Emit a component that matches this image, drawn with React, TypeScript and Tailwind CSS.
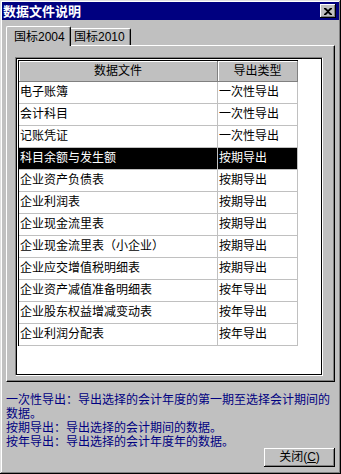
const rows: [string, string][] = [
  ['电子账簿', '一次性导出'],
  ['会计科目', '一次性导出'],
  ['记账凭证', '一次性导出'],
  ['科目余额与发生额', '按期导出'],
  ['企业资产负债表', '按期导出'],
  ['企业利润表', '按期导出'],
  ['企业现金流里表', '按期导出'],
  ['企业现金流里表（小企业）', '按期导出'],
  ['企业应交增值税明细表', '按期导出'],
  ['企业资产减值准备明细表', '按年导出'],
  ['企业股东权益增减变动表', '按年导出'],
  ['企业利润分配表', '按年导出'],
];

const font = "font-['Liberation_Sans','Noto_Sans_CJK_SC',sans-serif]";

export default function App() {
  return (
    <div className={`w-[341px] h-[474px] bg-[#c0c0c0] p-[2px] flex flex-col text-black ${font} shadow-[inset_-1px_-1px_#000,inset_1px_1px_#dfdfdf,inset_-2px_-2px_#808080,inset_2px_2px_#fff]`}>
      {/* title bar */}
      <div className="h-[18px] bg-[#000080] flex items-center justify-between pl-[1px] pr-[3px]">
        <span className="text-white font-bold text-[13px] leading-[18px] font-['Noto_Sans_CJK_SC',sans-serif]">数据文件说明</span>
        <button className="w-[16px] h-[14px] bg-[#c0c0c0] flex items-center justify-center shadow-[inset_-1px_-1px_#000,inset_1px_1px_#fff,inset_-2px_-2px_#808080]">
          <svg width="8" height="7" viewBox="0 0 8 7">
            <path d="M0 0h2l2 2 2-2h2v1L5 3.5 8 6v1H6L4 5 2 7H0V6l3-2.5L0 1z" fill="#000" />
          </svg>
        </button>
      </div>

      {/* tabs */}
      <div className="mt-[6px] ml-[4px] flex items-end h-[20px] relative z-10">
        <div className="h-[20px] w-[65px] bg-[#c0c0c0] border-l border-t border-white rounded-tl-[2px] rounded-tr-[2px] shadow-[inset_-1px_0_#808080] border-r border-r-black flex items-center pl-[7px] text-[12px] leading-none">
          国标2004
        </div>
        <div className="h-[17px] w-[60px] mb-[1px] bg-[#c0c0c0] border-t border-white rounded-tr-[2px] border-r border-r-black shadow-[inset_-1px_0_#808080] flex items-center pl-[3px] text-[12px] leading-none">
          国标2010
        </div>
      </div>

      {/* panel */}
      <div className="ml-[4px] mr-[4px] -mt-[1px] h-[337px] border-l border-t border-white border-r border-b border-r-black border-b-black shadow-[inset_-1px_-1px_#808080] pt-[11px] pl-[8px] pr-[11px] pb-[5px]">
        <div className="h-full border border-t-[#808080] border-l-[#808080] border-b-white border-r-white">
          <div className="h-full border border-black bg-white pl-[1px] pt-[1px]">
            <div className="w-[280px] border-l border-t border-black text-[12px] leading-[21px]">
              <div className="flex h-[21px] bg-[#c0c0c0]">
                <div className="w-[199px] text-center border-r border-b border-[#808080] shadow-[inset_1px_1px_#fff]">数据文件</div>
                <div className="w-[80px] text-center border-r border-b border-[#808080] shadow-[inset_1px_1px_#fff]">导出类型</div>
              </div>
              {rows.map(([name, type], i) => {
                const sel = i === 3;
                return (
                  <div key={i} className={`flex h-[22px] border-b border-[#c0c0c0] ${sel ? 'bg-black text-white' : ''}`}>
                    <div className="w-[199px] pl-[1px] border-r border-[#c0c0c0] whitespace-nowrap">{name}</div>
                    <div className="w-[80px] pl-[1px] border-r border-[#c0c0c0] whitespace-nowrap">{type}</div>
                  </div>
                );
              })}
            </div>
          </div>
        </div>
      </div>

      {/* description */}
      <div className="mt-[10px] ml-[4px] w-[328px] text-[12px] leading-[14px] text-[#000080] font-['Noto_Sans_CJK_SC',sans-serif]">
        <p>一次性导出：导出选择的会计年度的第一期至选择会计期间的数据。</p>
        <p>按期导出：导出选择的会计期间的数据。</p>
        <p>按年导出：导出选择的会计年度年的数据。</p>
      </div>

      {/* button */}
      <div className="flex justify-end pr-[4px]">
        <button className="w-[71px] h-[19px] bg-[#c0c0c0] text-[12px] leading-[19px] text-center shadow-[inset_-1px_-1px_#000,inset_1px_1px_#fff,inset_-2px_-2px_#808080]">
          关闭(<span className="underline">C</span>)
        </button>
      </div>
    </div>
  );
}
